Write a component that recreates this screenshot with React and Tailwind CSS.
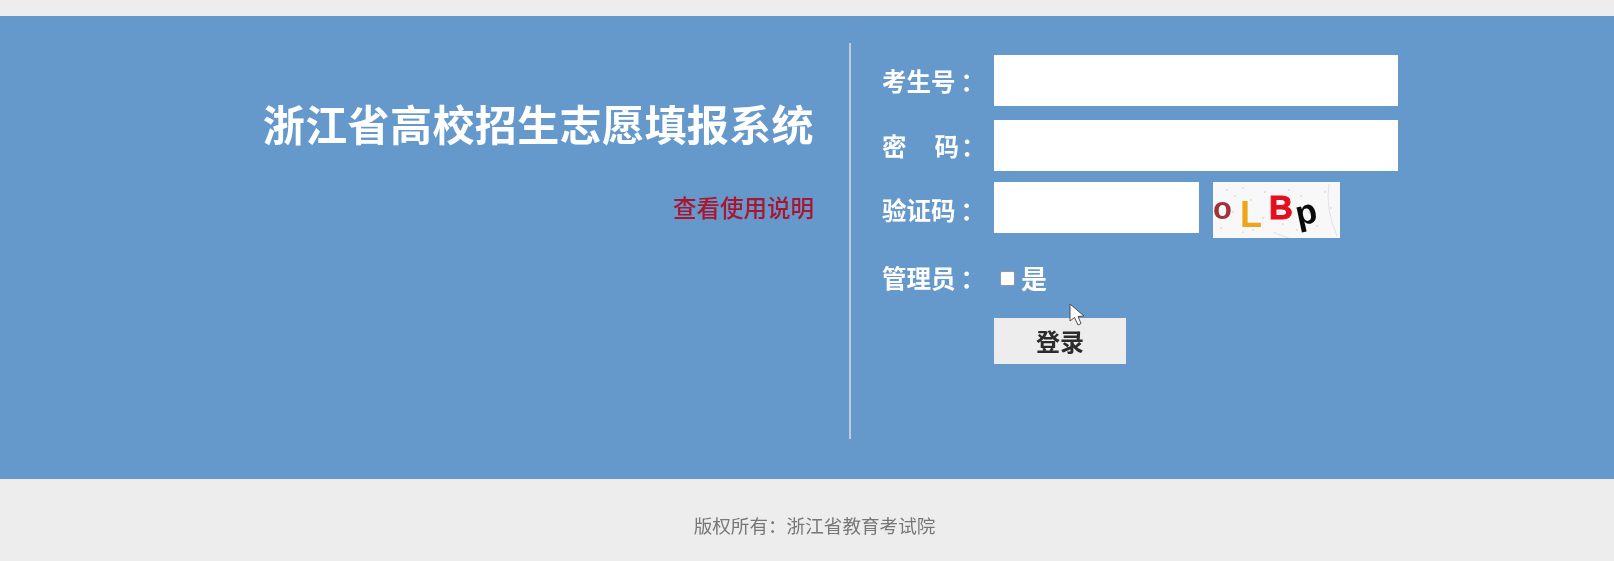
import React from "react";

const CJK = "font-['Noto_Sans_CJK_SC','Liberation_Sans',sans-serif]";

const NOISE = [
  [14, 8], [22, 14], [30, 6], [38, 18], [52, 10], [60, 22], [76, 8], [88, 14], [96, 30], [104, 44],
  [8, 46], [30, 50], [50, 36], [70, 42], [84, 48], [112, 10], [118, 26], [66, 30], [40, 48], [20, 30],
];

function Captcha() {
  return (
    <svg width="127" height="56" viewBox="0 0 127 56" className="block bg-[#f8f8f8]">
      {NOISE.map(([x, y], i) => (
        <circle key={i} cx={x} cy={y} r="0.8" fill="#c4ccd4" />
      ))}
      <path d="M116 2 Q112 26 124 54" stroke="#dfe3e6" fill="none" />
      <path d="M60 50 Q68 54 76 56" stroke="#dfe3e6" fill="none" />
      <text x="0" y="37" fontFamily="Liberation Sans" fontWeight="700" fontSize="31" fill="#a3303a">o</text>
      <text x="27" y="45" fontFamily="Liberation Sans" fontWeight="700" fontSize="36" fill="#eea51c">L</text>
      <text x="56" y="37" fontFamily="Liberation Sans" fontWeight="700" fontSize="33" fill="#e60d1f" stroke="#e60d1f">B</text>
      <text x="0" y="0" transform="translate(85 44) rotate(-12)" fontFamily="Liberation Sans" fontWeight="700" fontSize="35" fill="#0a0a0a">p</text>
    </svg>
  );
}

function Cursor() {
  return (
    <svg width="18" height="24" viewBox="0 0 18 24" className="absolute left-[1069px] top-[303px]">
      <path d="M1 1 L1 18 L5.5 14.5 L9 22 L12 20.5 L9 13.5 L15 13 Z" fill="#fff" stroke="#4a4f55" strokeWidth="1" strokeLinejoin="round" />
    </svg>
  );
}

function Label({ children }) {
  return <div className="mt-[1px] w-[112px] shrink-0 text-[24.5px] leading-none font-bold text-white">{children}</div>;
}

export default function App() {
  return (
    <div className={`relative h-[561px] bg-[#ededed] pt-4 blur-[0.4px] ${CJK}`}>
      <div className="flex h-[463px] bg-[#6598cb] pt-[27px]">
        <div className="w-[849px] shrink-0 pt-[50px] pr-[35px] text-right">
          <h1 className="text-[42px] leading-[60px] font-bold tracking-[0.4px] text-white">浙江省高校招生志愿填报系统</h1>
          <a className="mt-[38px] block text-[23.5px] leading-8 font-medium text-[#a8172f]">查看使用说明</a>
        </div>
        <div className="h-[396px] w-[2px] bg-[#c2ccd8]"></div>
        <div className="pt-3 pl-[31px]">
          <div className="flex items-center">
            <Label>考生号<span className="ml-[5px]">：</span></Label>
            <input className="h-[51px] w-[404px] bg-white" />
          </div>
          <div className="mt-[14px] flex items-center">
            <Label>密<span className="ml-[28px]">码</span><span className="ml-[2px]">：</span></Label>
            <input type="password" className="h-[51px] w-[404px] bg-white" />
          </div>
          <div className="mt-[11px] flex items-start">
            <div className="pt-[15px]"><Label>验证码<span className="ml-[5px]">：</span></Label></div>
            <input className="h-[51px] w-[205px] bg-white" />
            <div className="ml-[14px]"><Captcha /></div>
          </div>
          <div className="mt-[20px] flex h-[40px] items-center">
            <Label>管理员<span className="ml-[5px]">：</span></Label>
            <div className="ml-[6px] h-[15px] w-[15px] rounded-[2px] border border-[#8e9aa8] bg-white"></div>
            <span className="ml-[6px] text-[26px] leading-none font-bold text-white">是</span>
          </div>
          <button className="mt-[20px] ml-[112px] block h-[46px] w-[132px] bg-[#ededed] text-[24px] leading-none font-bold text-[#2b2b2b]">登录</button>
        </div>
      </div>
      <div className="pt-[34px] pl-[15px] text-center text-[18.6px] leading-6 text-[#777]">版权所有：浙江省教育考试院</div>
      <Cursor />
    </div>
  );
}
